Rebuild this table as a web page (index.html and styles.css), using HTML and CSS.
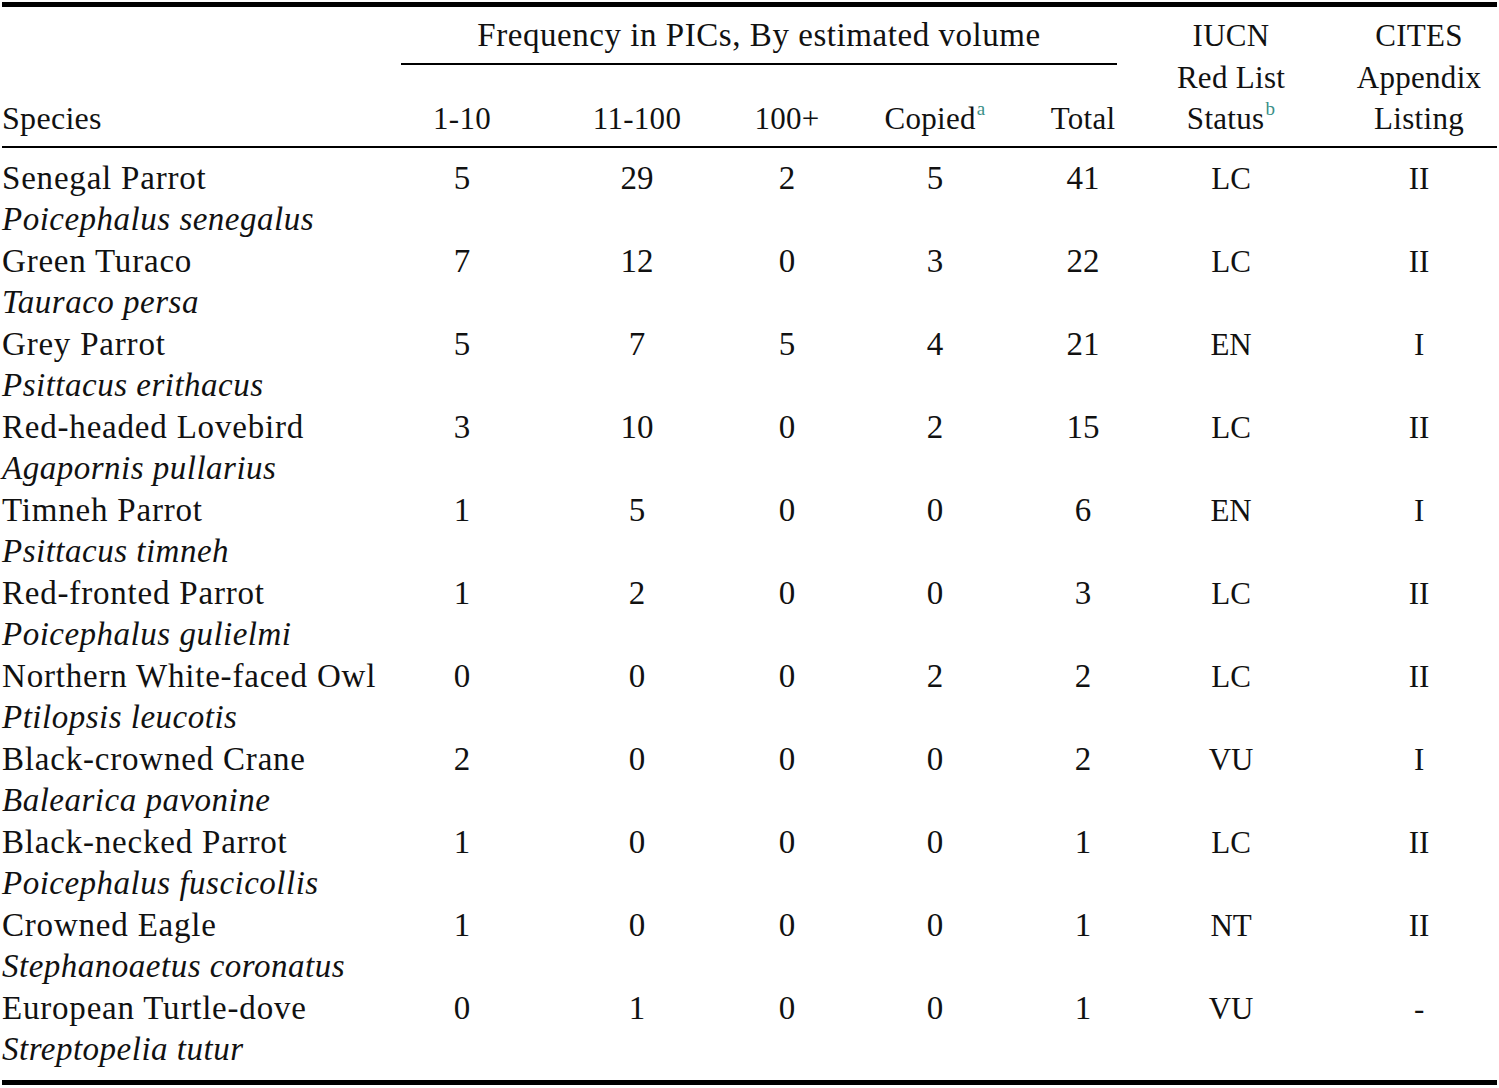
FILE: index.html
```html
<!DOCTYPE html>
<html lang="en">
<head>
<meta charset="utf-8">
<title>Species frequency table</title>
<link rel="stylesheet" href="styles.css">
</head>
<body>
<table class="tbl">
  <colgroup>
    <col class="c-species">
    <col class="c-n1">
    <col class="c-n2">
    <col class="c-n3">
    <col class="c-n4">
    <col class="c-n5">
    <col class="c-iucn">
    <col class="c-cites">
  </colgroup>
  <thead>
    <tr class="h1">
      <th rowspan="2" class="species-h">Species</th>
      <th colspan="5" class="group-h"><div class="group-label">Frequency in PICs, By estimated volume</div></th>
      <th rowspan="2" class="stack-h">IUCN<br>Red List<br>Status<sup class="note">b</sup></th>
      <th rowspan="2" class="stack-h">CITES<br>Appendix<br>Listing</th>
    </tr>
    <tr class="h2">
      <th class="num-h">1-10</th>
      <th class="num-h">11-100</th>
      <th class="num-h">100+</th>
      <th class="num-h">Copied<sup class="note">a</sup></th>
      <th class="num-h">Total</th>
    </tr>
  </thead>
  <tbody>
    <tr><td class="sp"><div>Senegal Parrot</div><div class="sci">Poicephalus senegalus</div></td><td>5</td><td>29</td><td>2</td><td>5</td><td>41</td><td class="st">LC</td><td class="st">II</td></tr>
    <tr><td class="sp"><div>Green Turaco</div><div class="sci">Tauraco persa</div></td><td>7</td><td>12</td><td>0</td><td>3</td><td>22</td><td class="st">LC</td><td class="st">II</td></tr>
    <tr><td class="sp"><div>Grey Parrot</div><div class="sci">Psittacus erithacus</div></td><td>5</td><td>7</td><td>5</td><td>4</td><td>21</td><td class="st">EN</td><td class="st">I</td></tr>
    <tr><td class="sp"><div>Red-headed Lovebird</div><div class="sci">Agapornis pullarius</div></td><td>3</td><td>10</td><td>0</td><td>2</td><td>15</td><td class="st">LC</td><td class="st">II</td></tr>
    <tr><td class="sp"><div>Timneh Parrot</div><div class="sci">Psittacus timneh</div></td><td>1</td><td>5</td><td>0</td><td>0</td><td>6</td><td class="st">EN</td><td class="st">I</td></tr>
    <tr><td class="sp"><div>Red-fronted Parrot</div><div class="sci">Poicephalus gulielmi</div></td><td>1</td><td>2</td><td>0</td><td>0</td><td>3</td><td class="st">LC</td><td class="st">II</td></tr>
    <tr><td class="sp"><div>Northern White-faced Owl</div><div class="sci">Ptilopsis leucotis</div></td><td>0</td><td>0</td><td>0</td><td>2</td><td>2</td><td class="st">LC</td><td class="st">II</td></tr>
    <tr><td class="sp"><div>Black-crowned Crane</div><div class="sci">Balearica pavonine</div></td><td>2</td><td>0</td><td>0</td><td>0</td><td>2</td><td class="st">VU</td><td class="st">I</td></tr>
    <tr><td class="sp"><div>Black-necked Parrot</div><div class="sci">Poicephalus fuscicollis</div></td><td>1</td><td>0</td><td>0</td><td>0</td><td>1</td><td class="st">LC</td><td class="st">II</td></tr>
    <tr><td class="sp"><div>Crowned Eagle</div><div class="sci">Stephanoaetus coronatus</div></td><td>1</td><td>0</td><td>0</td><td>0</td><td>1</td><td class="st">NT</td><td class="st">II</td></tr>
    <tr><td class="sp"><div>European Turtle-dove</div><div class="sci">Streptopelia tutur</div></td><td>0</td><td>1</td><td>0</td><td>0</td><td>1</td><td class="st">VU</td><td class="st">-</td></tr>
  </tbody>
</table>
</body>
</html>
```

FILE: styles.css
```css
html, body {
  margin: 0;
  padding: 0;
  background: #ffffff;
}

body {
  padding: 2px 0 0 2px;
  font-family: "Liberation Serif", "Times New Roman", serif;
  color: #111111;
}

.tbl {
  width: 1495px;
  table-layout: fixed;
  border-collapse: collapse;
  border-top: 5px solid #000000;
  border-bottom: 5px solid #000000;
  font-size: 33px;
  line-height: 41.5px;
}

.c-species { width: 397px; }
.c-n1 { width: 126px; }
.c-n2 { width: 224px; }
.c-n3 { width: 76px; }
.c-n4 { width: 220px; }
.c-n5 { width: 76px; }
.c-iucn { width: 220px; }
.c-cites { width: 156px; }

th, td {
  padding: 0;
  white-space: nowrap;
  font-weight: normal;
}

thead {
  border-bottom: 2px solid #000000;
}

th {
  text-align: center;
  vertical-align: bottom;
  font-size: 31px;
  letter-spacing: 0.3px;
}

.h1 th {
  padding-top: 8px;
}

.species-h {
  text-align: left !important;
  padding-bottom: 6px;
  font-size: 32px !important;
}

.group-h {
  vertical-align: top !important;
}

.group-label {
  margin: 0 4px 0 2px;
  padding-bottom: 6px;
  border-bottom: 2px solid #000000;
  font-size: 33px;
  letter-spacing: 0.55px;
}

.stack-h {
  padding-bottom: 6px;
}

.h2 th {
  padding-bottom: 6px;
}

.note {
  color: #3a8f87;
  font-size: 19px;
  line-height: 0;
  vertical-align: 0;
  position: relative;
  top: -14px;
  margin-left: 1px;
}

td {
  text-align: center;
  vertical-align: top;
}

td.sp {
  text-align: left;
  letter-spacing: 0.8px;
}

.sci {
  font-style: italic;
  letter-spacing: 0.5px;
}

td.st {
  font-size: 31px;
}

tbody tr:first-child td {
  padding-top: 10px;
}

tbody tr:last-child td {
  padding-bottom: 9px;
}
```
